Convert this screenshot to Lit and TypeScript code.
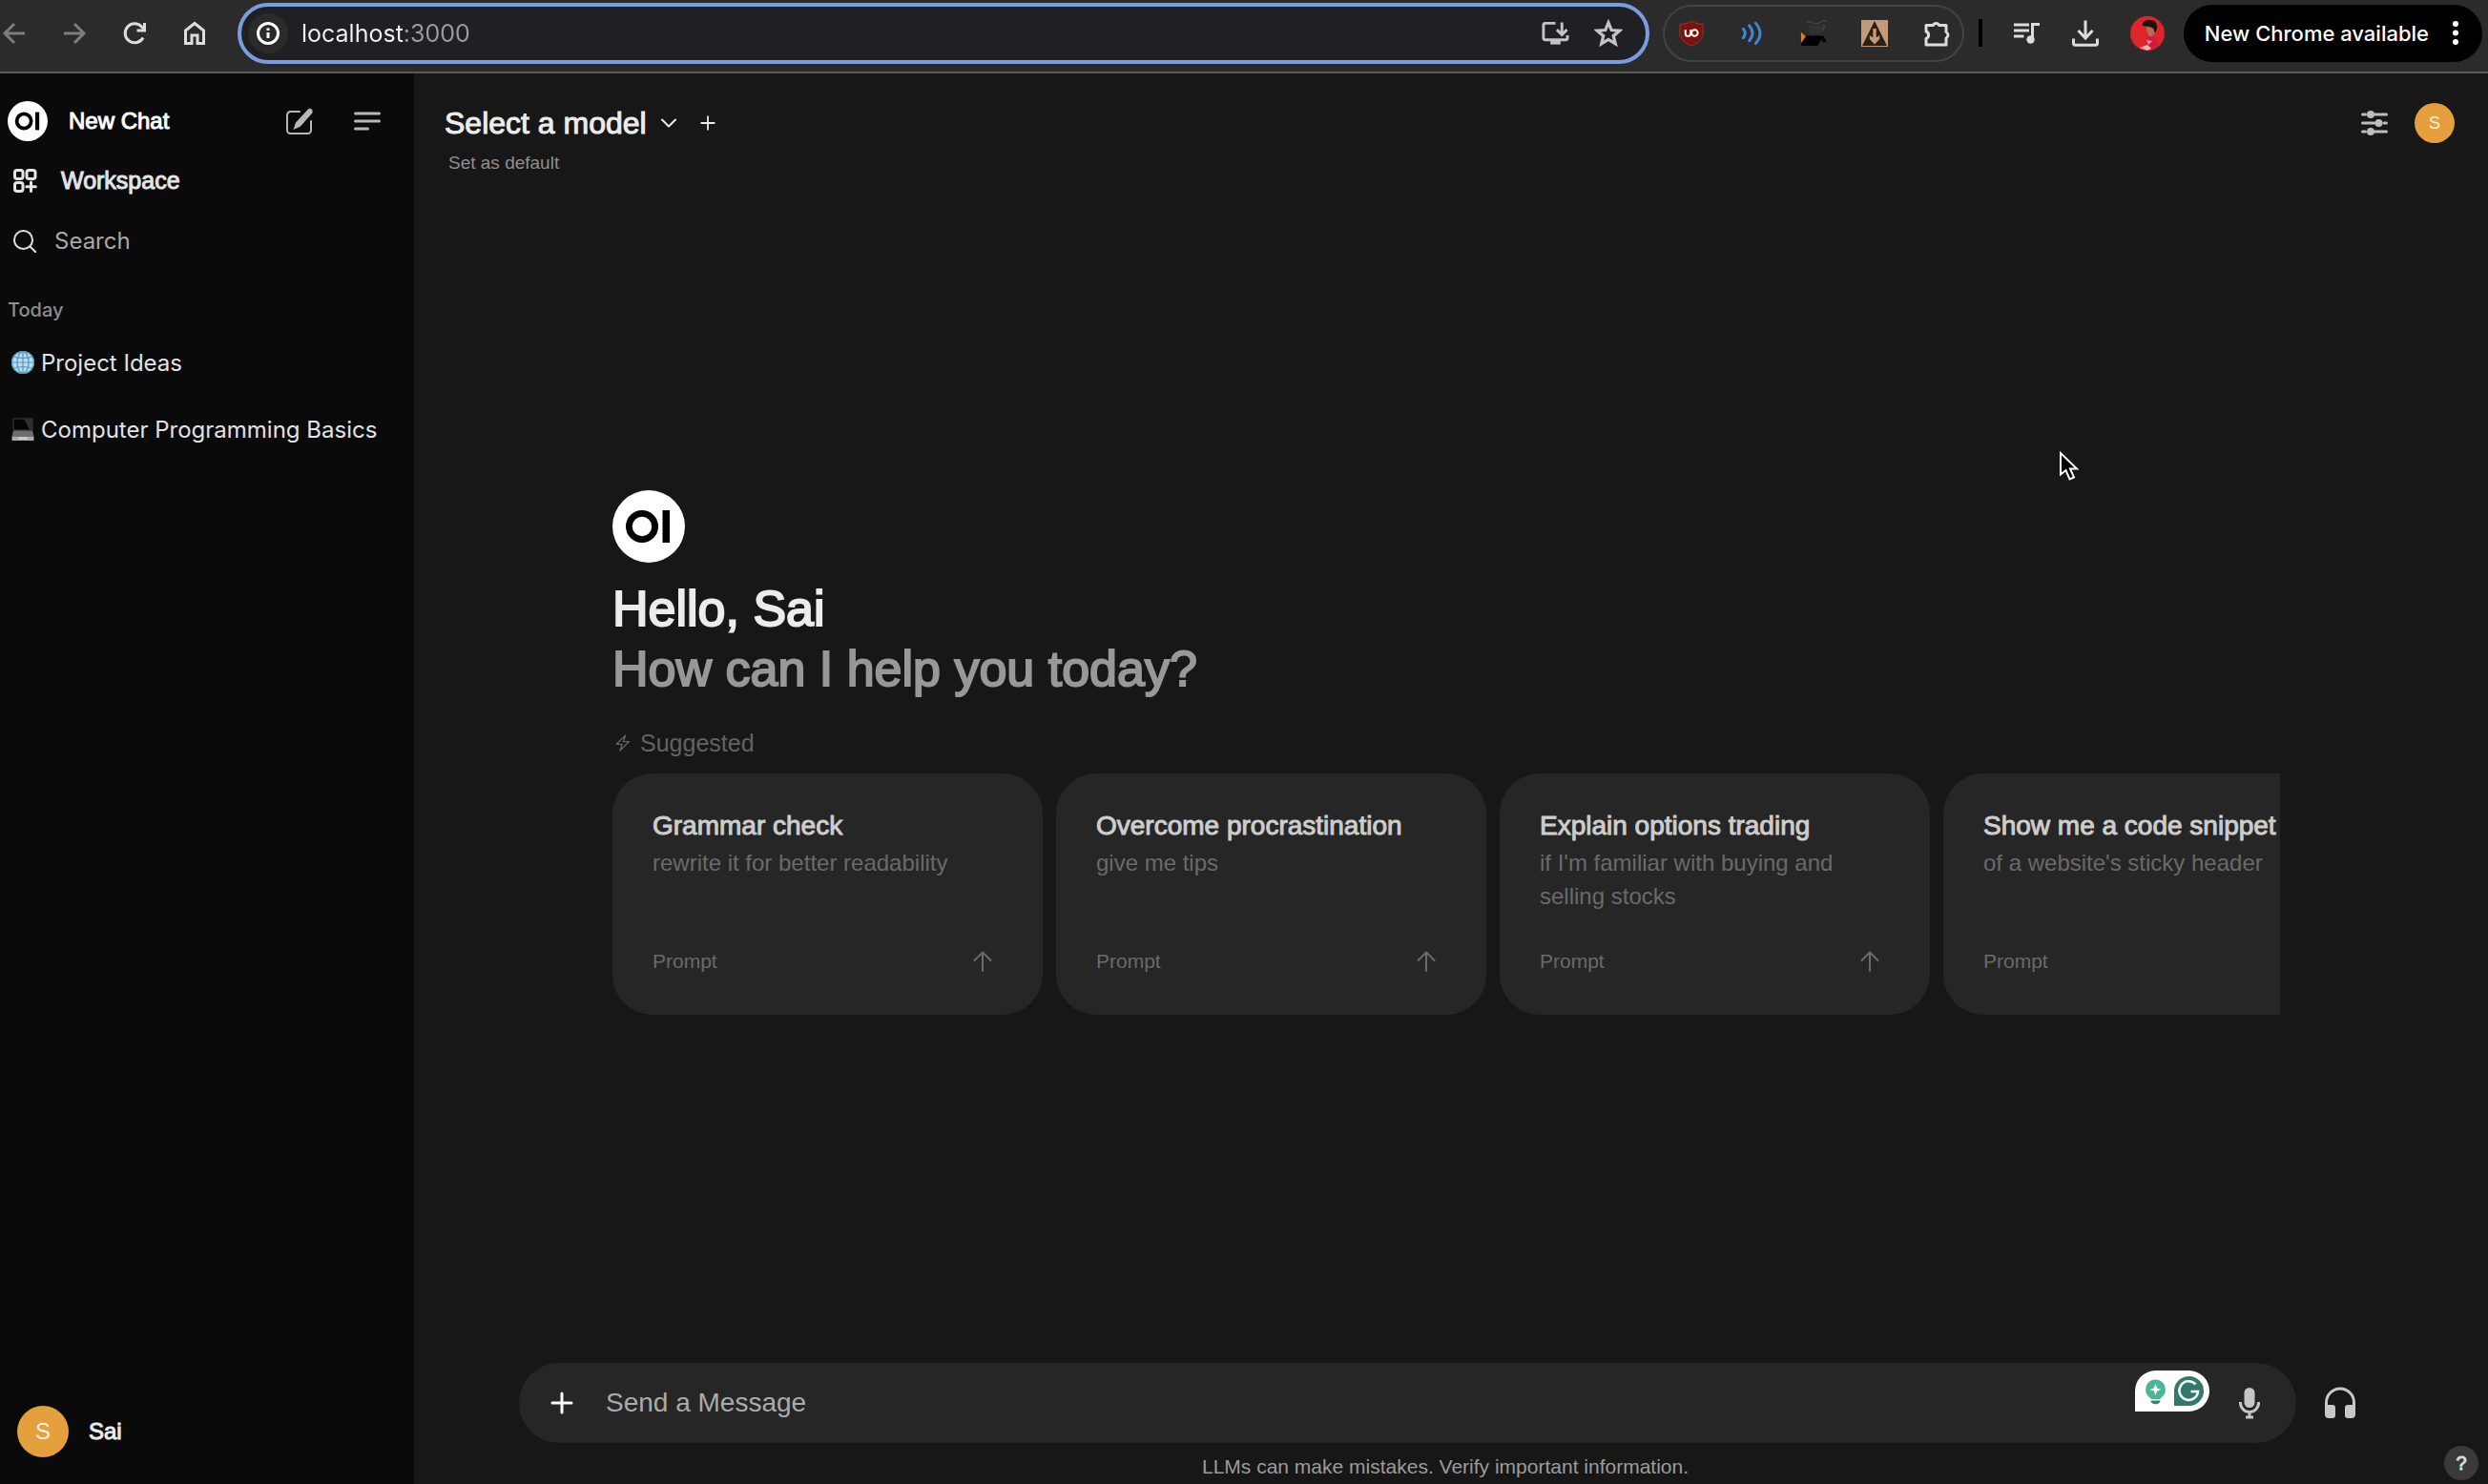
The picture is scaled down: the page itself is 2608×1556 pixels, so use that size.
import { LitElement, html, css, svg, TemplateResult } from "lit";
import { customElement, state } from "lit/decorators.js";

const icon = (size: number, viewBox: string, body: TemplateResult, cls = "line") =>
  html`<svg class=${cls} width=${size} height=${size} viewBox=${viewBox} aria-hidden="true">${body}</svg>`;

const back = svg`<path d="M25 14H4M14 4L4 14l10 10"/>`;
const forward = svg`<path d="M3 14h21M14 4l10 10-10 10"/>`;
const reload = svg`<path d="M23 18.500A10 10 0 1 1 21.500 7L24 9.500M24.500 3v8h-8"/>`;
const home = svg`<path d="M4.500 24.500V11L14 3.500 23.500 11v13.500H17V16h-6v8.500z"/>`;
const info = svg`<circle cx="14" cy="14" r="10.500"/><path d="M14 13v6M14 8.500v2.500"/>`;
const install = svg`<path d="M16 4H5a2 2 0 0 0-2 2v14a2 2 0 0 0 2 2h22a2 2 0 0 0 2-2v-3M23 3v13M17.500 11l5.500 5.500 5.500-5.500"/><path d="M10.500 22h11v5h-11z" fill="currentColor" stroke="none"/>`;
const star = svg`<path d="M14 3.500l3 7.300 7.900.6-6 5.100 1.900 7.700-6.800-4.200-6.800 4.200 1.900-7.700-6-5.100 7.900-.6z"/>`;
const puzzle = svg`<path d="M4 6.500h7.500a3.200 3.200 0 0 1 6 0H25v7a3.700 3.700 0 0 1 0 6.500v7H4v-6.500a4 4 0 0 0 0-7.500z" stroke-linejoin="round"/>`;
const shield = svg`<path d="M14 1c3.500 2.500 8 3.500 12.500 3.500V14c0 6.500-5 11-12.500 14C6.500 25 1.500 20.500 1.500 14V4.500C6 4.500 10.500 3.500 14 1z" fill="#7a120e" stroke="#98362f" stroke-width="1"/><path d="M7.500 10.500v4.200a2.800 2.800 0 0 0 5.600 0v-4.200" fill="none" stroke="#fff" stroke-width="2"/><circle cx="17.500" cy="14" r="3.400" fill="none" stroke="#fff" stroke-width="2"/>`;
const waves = svg`<path d="M4 9.500q4 4.500 0 10M10.500 6q7 8.500 0 16.500M17.500 3.500q9.500 11 0 22"/>`;
const teapot = svg`<path d="M1 13l5 5-5 7z" fill="#d9822b"/><path d="M1 28v-3l6-8h18l4 7h-4l-2-3-4 7z" fill="#000"/><path d="M7 3c4-4 6 2 11 1s7-5 11-2M25 5c4 2-2 4 0 7" fill="none" stroke="#454545" stroke-width="1.500"/><path d="M9 6h15l-2 9H11z" fill="#333"/>`;
const tan = svg`<path d="M0 0h28v28H0z" fill="#c39b7b"/><path d="M14 1l13 26H1z" fill="#2e1e14"/><path d="M12.300 9h3.400v9.500l3.500-2.500v4L14 25.500 8.800 20v-4l3.500 2.500z" fill="#c39b7b"/>`;
const media = svg`<path d="M1 6h16M1 12h16M1 18h10.500M20.500 21V5.500H28"/><circle cx="18.500" cy="21.500" r="4.200" fill="currentColor" stroke="none"/>`;
const download = svg`<path d="M15 1.500v18M7.500 12l7.500 8 7.500-8M2.500 20.500v4.800a2 2 0 0 0 2 2h21a2 2 0 0 0 2-2v-4.800"/>`;
const portrait = svg`<circle cx="18" cy="18" r="18" fill="#dc262b"/><path d="M18 19c6-1 11 5 11 12-4 4-9 5-14 4l2-8z" fill="#d21c3f"/><path d="M13 8c1-5 11-6 14-1 2 4 1 8-1 10l-5-6-8-1z" fill="#1d1214"/><path d="M17 11l6 1c3 2 3 7 0 9-4 1-5-2-4-3l-2-3z" fill="#b06c5c"/><path d="M10 33l8-3 4 4-4 2z" fill="#e5b9a4"/><path d="M17 25l6 1-4 4z" fill="#e88fa8"/>`;
const dots = svg`<circle cx="4" cy="4" r="3"/><circle cx="4" cy="13.500" r="3"/><circle cx="4" cy="23" r="3"/>`;
const logo = svg`<circle cx="38" cy="38" r="38" fill="#fff"/><circle cx="31" cy="38" r="13.600" fill="none" stroke="#000" stroke-width="6.800"/><path d="M52.500 21h7.500v34h-7.500z" fill="#000"/>`;
const pencil = svg`<path d="M15 5H5.500A3.500 3.500 0 0 0 2 8.500v16A3.500 3.500 0 0 0 5.500 28h18a3.500 3.500 0 0 0 3.500-3.500V15"/><path d="M24 2.500c2-2 6 1 4.300 4L16 20.500 8.500 24l2.500-7.500z" fill="currentColor" stroke="none"/>`;
const menu = svg`<path d="M1.500 6h25M1.500 14h25M1.500 22h13"/>`;
const workspace = svg`<rect x="1.500" y="1.500" width="8.500" height="9" rx="2.500"/><rect x="14" y="1.500" width="9" height="9" rx="2.500"/><rect x="1.500" y="14.500" width="8.500" height="9" rx="2.500"/><path d="M18.500 14v9.500M13.800 18.700h9.500"/>`;
const search = svg`<circle cx="10.500" cy="10.500" r="9.500"/><path d="M17.500 17.500l6 6"/>`;
const globe = svg`<circle cx="12" cy="12" r="12" fill="#b5dcf0"/><g fill="none" stroke="#5795b9" stroke-width="1.200"><circle cx="12" cy="12" r="11.400"/><ellipse cx="12" cy="12" rx="6" ry="11.400"/><path d="M12 0v24M0 12h24M2 6q10 3 20 0M2 18q10-3 20 0"/></g>`;
const laptop = svg`<path d="M2 1h20v12H2z" fill="#050505" stroke="#3d3d3d"/><path d="M13 1h9v12h-3z" fill="#2e2e2e"/><path d="M2 13.500h20l1.500 6h-23z" fill="#6c6c6c"/><path d="M.5 19.500h23V24H.5z" fill="#aaa"/><path d="M8 20h8l1 3H7z" fill="#c9c9c9"/>`;
const chevron = svg`<path d="M3 6.500l7 7 7-7"/>`;
const plus = svg`<path d="M10 2.500v15M2.500 10h15"/>`;
const bigPlus = svg`<path d="M12 2v20M2 12h20"/>`;
const sliders = svg`<path d="M1.500 5h3M14 5h12.500M1.500 14h12.500M24 14h2.500M1.500 23h3M14 23h12.500"/><g fill="currentColor" stroke="none"><circle cx="10" cy="5" r="4"/><circle cx="18.500" cy="14" r="4"/><circle cx="10" cy="23" r="4"/></g>`;
const bolt = svg`<path d="M12 1L1.500 11.500H8L5.500 19 16 8.500H9.500z" stroke-width="1.500"/>`;
const arrowUp = svg`<path d="M12 22V2.500M3.500 11L12 2.500l8.500 8.500"/>`;
const mic = svg`<rect x="11.500" y="1" width="11" height="21" rx="5.500" fill="currentColor" stroke="none"/><path d="M7.500 16v1a9.500 9.500 0 0 0 19 0v-1M17 27v5M13 32h8"/>`;
const headphones = svg`<path d="M2.500 26V16.500a14.500 14.500 0 0 1 29 0V26"/><path d="M1 19h8a3 3 0 0 1 3 3v8a3 3 0 0 1-3 3H5a4 4 0 0 1-4-4zM33 19h-8a3 3 0 0 0-3 3v8a3 3 0 0 0 3 3h4a4 4 0 0 0 4-4z" fill="currentColor" stroke="none"/>`;

interface Suggestion {
  title: string;
  detail: string;
}

@customElement("app-root")
export class AppRoot extends LitElement {
  @state() private suggestions: Suggestion[] = [
    { title: "Grammar check", detail: "rewrite it for better readability" },
    { title: "Overcome procrastination", detail: "give me tips" },
    { title: "Explain options trading", detail: "if I'm familiar with buying and selling stocks" },
    { title: "Show me a code snippet", detail: "of a website's sticky header" },
  ];

  static styles = css`
    :host {
      display: flex;
      flex-direction: column;
      min-height: 100vh;
      background: #171717;
      color: #ececec;
      font-family: "Liberation Sans", Arial, sans-serif;
      font-size: 25px;
      position: relative;
    }
    * { box-sizing: border-box; }
    button, input {
      font: inherit;
      color: inherit;
      background: none;
      border: 0;
      padding: 0;
      margin: 0;
      outline: none;
    }
    button { display: inline-flex; align-items: center; cursor: pointer; flex: none; }
    a { color: inherit; text-decoration: none; }
    svg { display: block; flex: none; }
    h1, h2, p, ul { margin: 0; padding: 0; font-weight: 400; }
    .line { fill: none; stroke: currentColor; stroke-width: 3; }
    .thin { fill: none; stroke: currentColor; stroke-width: 2; stroke-linecap: round; stroke-linejoin: round; }
    .round { fill: none; stroke: currentColor; stroke-width: 3; stroke-linecap: round; stroke-linejoin: round; }
    .solid { fill: currentColor; }
    .medium { -webkit-text-stroke: 1px currentColor; }
    .ui { font-family: Inter, "Liberation Sans", sans-serif; }

    .toolbar {
      display: flex;
      align-items: center;
      height: 77px;
      padding: 0 6px 6px 1px;
      background: #2b2b2b;
      border-bottom: 2px solid #5b5b5b;
      color: #dcdcdc;
    }
    .nav { display: flex; gap: 35px; padding-right: 31px; }
    .nav .dim { color: #7d7d7d; }
    .address {
      flex: 1;
      display: flex;
      align-items: center;
      height: 64px;
      border: 4px solid #7a9ddf;
      border-radius: 32px;
      background: #202024;
      padding: 0 24px 0 7px;
      gap: 14px;
    }
    .site { width: 42px; height: 42px; border-radius: 50%; background: #2b2b2b; justify-content: center; color: #fff; }
    .url {
      flex: 1;
      min-width: 0;
      font-size: 25px;
      background: linear-gradient(to right, #f4f4f4 108px, #9c9ca0 108px);
      -webkit-background-clip: text;
      background-clip: text;
      -webkit-text-fill-color: transparent;
    }
    .actions { display: flex; gap: 26px; color: #c4c4c6; }
    .extensions {
      display: flex;
      align-items: center;
      gap: 36px;
      height: 60px;
      margin-left: 14px;
      padding: 0 12px 0 14px;
      border: 2px solid #434343;
      border-radius: 30px;
      color: #ddd;
    }
    .blue { color: #3f86d8; }
    .divider { width: 4px; height: 29px; background: #000; margin: 0 32px 0 15px; }
    .tools { display: flex; align-items: center; gap: 32px; }
    .update {
      height: 60px;
      margin-left: 20px;
      padding: 0 24px 0 22px;
      border-radius: 30px;
      background: #000;
      color: #fff;
      font-size: 22px;
      font-weight: 500;
      gap: 24px;
    }

    .body { flex: 1; display: flex; }
    .sidebar {
      flex: none;
      width: 434px;
      display: flex;
      flex-direction: column;
      padding: 18px 8px 28px;
      background: #0a0a0a;
    }
    .row { display: flex; align-items: center; height: 63px; padding: 0 6px; }
    .brand { padding: 0 27px 0 0; color: #fff; font-size: 24px; }
    .new { flex: 1; gap: 22px; }
    .brand .tool { color: #b8b8b8; margin-left: 42px; }
    .workspace { gap: 25px; color: #e4e4e4; }
    .find { gap: 19px; color: #ddd; font-size: 24px; }
    .find input { flex: 1; min-width: 0; }
    .find input::placeholder { color: #a8a8a8; opacity: 1; }
    .today { padding-top: 21px; line-height: 40px; font-size: 20px; font-weight: 500; color: #8e8e8e; }
    .chats { list-style: none; }
    .chat { display: flex; align-items: center; gap: 7px; height: 70px; padding: 0 4px; font-size: 24px; color: #e2e2e2; white-space: nowrap; }
    .account { margin-top: auto; gap: 21px; padding: 0 10px; font-size: 24px; }
    .avatar {
      display: inline-flex;
      align-items: center;
      justify-content: center;
      width: 42px;
      height: 42px;
      border-radius: 50%;
      background: #e59f3c;
      color: #fdf3e0;
      font-size: 18px;
    }
    .avatar.large { width: 54px; height: 54px; font-size: 24px; }

    .main { flex: 1; min-width: 0; display: flex; flex-direction: column; }
    .head { display: flex; justify-content: space-between; padding: 28px 35px 0 32px; }
    .model { display: flex; align-items: center; gap: 22px; height: 48px; }
    .select { font-size: 32px; gap: 13px; }
    .default { font-size: 19px; line-height: 36px; color: #8f8f8f; padding-left: 4px; }
    .right { display: flex; align-items: center; gap: 28px; height: 48px; color: #bdbdbd; }
    .center {
      flex: 1;
      display: flex;
      flex-direction: column;
      justify-content: center;
      padding: 0 218px 40px 208px;
    }
    .greeting { padding-top: 17px; font-size: 52px; line-height: 63px; -webkit-text-stroke: 2px currentColor; }
    .hello { font-size: inherit; }
    .ask { color: #989898; }
    .suggested { display: flex; align-items: center; gap: 9px; margin: 31px 0 17px; line-height: 30px; color: #626262; }
    .suggested svg { margin-left: 2px; }
    .cards { display: flex; gap: 14px; overflow: hidden; }
    .card {
      width: 451px;
      height: 253px;
      flex-direction: column;
      align-items: stretch;
      padding: 37px 42px 38px;
      border-radius: 42px;
      background: #262626;
      text-align: left;
    }
    .title { font-size: 28px; line-height: 36px; color: #cdcdcd; white-space: nowrap; }
    .detail { font-size: 24px; line-height: 35px; padding-top: 3px; color: #6a6a6a; }
    .prompt { display: flex; align-items: center; justify-content: space-between; margin-top: auto; padding-right: 9px; font-size: 21px; line-height: 36px; color: #6a6a6a; }
    .foot { padding: 0 122px 0 110px; }
    .compose { display: flex; align-items: center; gap: 29px; padding-right: 16px; }
    .box {
      flex: 1;
      display: flex;
      align-items: center;
      height: 84px;
      padding: 0 32px 0 33px;
      border-radius: 42px;
      background: #262626;
      color: #c6c6c6;
    }
    .add { color: #fff; }
    .message { flex: 1; min-width: 0; font-size: 28px; padding-left: 34px; }
    .message::placeholder { color: #ababab; opacity: 1; }
    .grammar { align-self: flex-start; margin: 8px 25px 0 0; }
    .phones { color: #c8c8c8; }
    .note { text-align: center; font-size: 21px; line-height: 37px; padding-top: 6px; color: #9c9c9c; }
    .help {
      position: absolute;
      right: 10px;
      bottom: 4px;
      width: 36px;
      height: 36px;
      border-radius: 50%;
      background: #3a3a3a;
      color: #ddd;
      font-size: 20px;
      justify-content: center;
    }
    .cursor { position: absolute; left: 2157px; top: 472px; }
  `;

  private toolbar() {
    return html`<header class="toolbar ui">
      <nav class="nav" aria-label="Browser">
        <button class="dim" aria-label="Back">${icon(28, "0 0 28 28", back)}</button>
        <button class="dim" aria-label="Forward">${icon(28, "0 0 28 28", forward)}</button>
        <button aria-label="Reload">${icon(28, "0 0 28 28", reload)}</button>
        <button aria-label="Home">${icon(28, "0 0 28 28", home)}</button>
      </nav>
      <div class="address">
        <button class="site" aria-label="Site information">${icon(28, "0 0 28 28", info)}</button>
        <input class="url" aria-label="Address" value="localhost:3000" />
        <div class="actions">
          <button aria-label="Install app">${icon(30, "0 0 31 30", install)}</button>
          <button aria-label="Bookmark">${icon(30, "0 0 28 28", star)}</button>
        </div>
      </div>
      <div class="extensions">
        <button aria-label="Content blocker">${icon(28, "0 0 28 29", shield, "")}</button>
        <button class="blue" aria-label="Audio">${icon(28, "0 0 28 29", waves, "round")}</button>
        <button aria-label="Teapot">${icon(28, "0 0 29 29", teapot, "")}</button>
        <button aria-label="Downloader">${icon(28, "0 0 28 28", tan, "")}</button>
        <button aria-label="Extensions">${icon(30, "0 0 30 30", puzzle)}</button>
      </div>
      <div class="divider"></div>
      <div class="tools">
        <button aria-label="Media">${icon(29, "0 0 29 29", media)}</button>
        <button aria-label="Downloads">${icon(30, "0 0 30 30", download)}</button>
        <button aria-label="Profile">${icon(36, "0 0 36 36", portrait, "")}</button>
      </div>
      <button class="update">New Chrome available
        <svg class="solid" width="8" height="27" viewBox="0 0 8 27" aria-hidden="true">${dots}</svg>
      </button>
    </header>`;
  }

  private sidebar() {
    return html`<aside class="sidebar">
      <div class="row brand">
        <button class="new">${icon(42, "0 0 76 76", logo, "")}<span class="medium">New Chat</span></button>
        <button class="tool" aria-label="Compose">${icon(30, "0 0 30 30", pencil, "thin")}</button>
        <button class="tool" aria-label="Toggle sidebar">${icon(28, "0 0 28 28", menu, "round")}</button>
      </div>
      <a class="row workspace" href="#workspace">${icon(25, "0 0 25 25", workspace, "round")}<span class="medium">Workspace</span></a>
      <label class="row find ui">${icon(24, "0 0 24 24", search, "thin")}<input aria-label="Search" placeholder="Search" /></label>
      <h2 class="today ui">Today</h2>
      <ul class="chats ui">
        <li><a class="chat" href="#ideas">${icon(24, "0 0 24 24", globe, "")}Project Ideas</a></li>
        <li><a class="chat" href="#basics">${icon(24, "0 0 24 24", laptop, "")}Computer Programming Basics</a></li>
      </ul>
      <button class="account"><span class="avatar large">S</span><span class="medium">Sai</span></button>
    </aside>`;
  }

  private card(s: Suggestion) {
    return html`<button class="card">
      <span class="title medium">${s.title}</span>
      <span class="detail">${s.detail}</span>
      <span class="prompt">Prompt ${icon(24, "0 0 24 24", arrowUp, "thin")}</span>
    </button>`;
  }

  render() {
    return html`${this.toolbar()}
      <div class="body">
        ${this.sidebar()}
        <main class="main">
          <div class="head">
            <div>
              <div class="model">
                <button class="select"><span class="medium">Select a model</span>${icon(20, "0 0 20 20", chevron, "thin")}</button>
                <button aria-label="Add model">${icon(18, "0 0 20 20", plus, "thin")}</button>
              </div>
              <button class="default">Set as default</button>
            </div>
            <div class="right">
              <button aria-label="Controls">${icon(28, "0 0 28 28", sliders, "round")}</button>
              <button class="avatar" aria-label="Account">S</button>
            </div>
          </div>
          <section class="center">
            ${icon(76, "0 0 76 76", logo, "")}
            <div class="greeting">
              <h1 class="hello">Hello, Sai</h1>
              <p class="ask">How can I help you today?</p>
            </div>
            <div class="suggested">${icon(18, "0 0 18 20", bolt, "thin")}Suggested</div>
            <div class="cards">${this.suggestions.map((s) => this.card(s))}</div>
          </section>
          <footer class="foot">
            <div class="compose">
              <div class="box">
                <button class="add" aria-label="More">${icon(24, "0 0 24 24", bigPlus, "round")}</button>
                <input class="message" aria-label="Send a Message" placeholder="Send a Message" />
                <svg class="grammar" width="78" height="43" viewBox="0 0 78 43" aria-hidden="true">
                  <path d="M0 43V21.500A21.500 21.500 0 0 1 21.500 0h35a21.500 21.500 0 0 1 0 43z" fill="#fff"/>
                  <path d="M21.500 9.500a10.500 10.500 0 0 1 6 19l-1.500 1.500h-9l-1.500-1.500a10.500 10.500 0 0 1 6-19z" fill="#4db399"/>
                  <path d="M16.500 31.500h10c0 5-10 5-10 0z" fill="#39806f"/>
                  <path d="M21.500 14l1.600 4.400 4.400 1.600-4.400 1.600-1.600 4.400-1.600-4.400-4.400-1.600 4.400-1.600z" fill="#fff"/>
                  <path d="M41 37V21.500A15.500 15.500 0 1 1 56.500 37z" fill="#317a6b"/>
                  <path d="M63.500 14.500A9.800 9.800 0 1 0 66 22h-7.500" fill="none" stroke="#fff" stroke-width="2.600"/>
                </svg>
                <button aria-label="Dictate">${icon(34, "0 0 34 34", mic)}</button>
              </div>
              <button class="phones" aria-label="Call">${icon(34, "0 0 34 34", headphones)}</button>
            </div>
            <p class="note">LLMs can make mistakes. Verify important information.</p>
          </footer>
        </main>
      </div>
      <button class="help medium" aria-label="Help">?</button>
      <svg class="cursor" width="24" height="34" viewBox="0 0 24 34" aria-hidden="true">
        <path d="M3 3v22.500l5.500-4.500 4 9.500 4.500-2-4-9h7z" fill="#000" stroke="#fff" stroke-width="2"/>
      </svg>`;
  }
}
